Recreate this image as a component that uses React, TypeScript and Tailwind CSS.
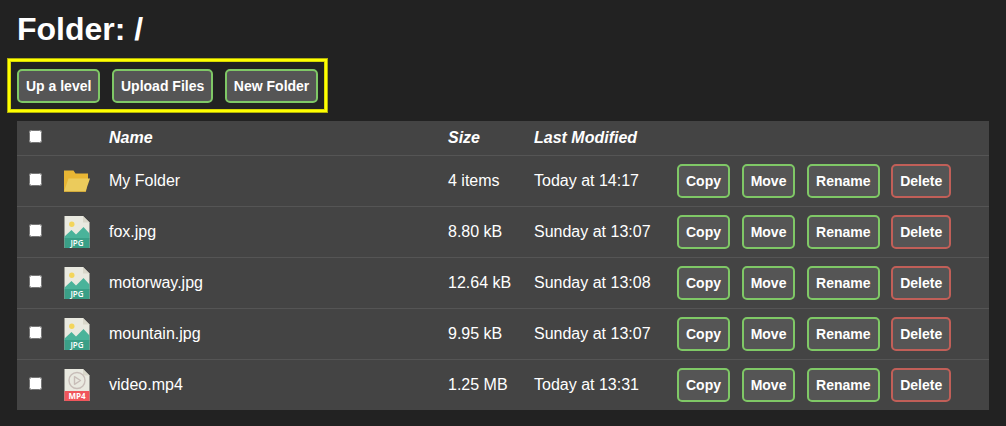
import React from "react";

type Kind = "folder" | "jpg" | "mp4";

interface Entry {
  name: string;
  kind: Kind;
  size: string;
  modified: string;
}

const entries: Entry[] = [
  { name: "My Folder", kind: "folder", size: "4 items", modified: "Today at 14:17" },
  { name: "fox.jpg", kind: "jpg", size: "8.80 kB", modified: "Sunday at 13:07" },
  { name: "motorway.jpg", kind: "jpg", size: "12.64 kB", modified: "Sunday at 13:08" },
  { name: "mountain.jpg", kind: "jpg", size: "9.95 kB", modified: "Sunday at 13:07" },
  { name: "video.mp4", kind: "mp4", size: "1.25 MB", modified: "Today at 13:31" },
];

function FolderIcon() {
  return (
    <svg viewBox="0 0 26 32" className="block h-8 w-[26px]" aria-hidden="true">
      <path d="M0 5.500h9.500l2 3H24v5l-2 13H0z" fill="#e8b634" />
      <path d="M4.500 13.500H26l-4.500 13H0z" fill="#ebcb5c" />
      <path d="M0 26.500h21.700" stroke="#d3ab3c" />
    </svg>
  );
}

function FileIcon({ kind }: { kind: "jpg" | "mp4" }) {
  return (
    <svg viewBox="0 0 26 32" className="block h-8 w-[26px]" aria-hidden="true">
      <path d="M0.500 0H19l6.500 6.500V32h-25z" fill="#e9e9e0" />
      <path d="M19 0v6.500h6.500z" fill="#d9d7ca" />
      {kind === "jpg" ? (
        <>
          <circle cx="7.800" cy="8.300" r="2.700" fill="#f3d55b" />
          <path d="M0.500 20.500L7.500 14l4.500 4.500 7.500-7.500 6 6.500V23h-25z" fill="#4ab39a" />
          <path d="M0.500 22h25v10h-25z" fill="#3a9f87" />
        </>
      ) : (
        <>
          <circle cx="13" cy="11.500" r="8" fill="none" stroke="#c8bdb8" strokeWidth="1.400" />
          <path d="M10.500 7.700v7.600l6-3.800z" fill="none" stroke="#c8bdb8" strokeWidth="1.400" strokeLinejoin="round" />
          <path d="M0.500 22h25v10h-25z" fill="#f0565c" />
        </>
      )}
      <text
        x="13"
        y="30"
        textAnchor="middle"
        fill="#fff"
        className={
          kind === "jpg"
            ? "font-['Open_Sans',sans-serif] text-[8px] font-semibold"
            : "font-['Open_Sans',sans-serif] text-[8px] font-bold"
        }
      >
        {kind === "jpg" ? "JPG" : "MP4"}
      </text>
    </svg>
  );
}

function Button({ children, danger = false }: { children: React.ReactNode; danger?: boolean }) {
  return (
    <button
      type="button"
      className={`mr-2 h-[34px] rounded-[5px] border-2 bg-[#555] px-[7px] align-top text-sm font-bold whitespace-nowrap text-white last:mr-0 ${
        danger ? "border-[#c15f58]" : "border-[#7fc866]"
      }`}
    >
      {children}
    </button>
  );
}

export default function App() {
  return (
    <main className="min-h-screen bg-[#222] px-[17px] pt-[10px] pb-4 font-['Liberation_Sans',Arial,sans-serif] text-base text-white">
      <h1 className="text-[32px] leading-[38px] font-bold">Folder: /</h1>
      <div className="mt-[11px] -ml-[9px] w-fit border-2 border-[#ff0] px-[7px] pt-2 pb-[7px] text-[13px] whitespace-nowrap shadow-[0_0_0_1px_#b0b008,inset_0_0_0_1px_#d8d804]">
        <Button>Up a level</Button> <Button>Upload Files</Button> <Button>New Folder</Button>
      </div>
      <table className="mt-[9px] w-full table-fixed border-collapse bg-[#444] text-left">
        <colgroup>
          <col className="w-[35px]" />
          <col className="w-[45px]" />
          <col />
          <col className="w-[86px]" />
          <col className="w-[143px]" />
          <col className="w-[324px]" />
        </colgroup>
        <thead>
          <tr className="h-[34px] border-b border-[#555] italic">
            <th className="pb-[3px] pl-3">
              <input type="checkbox" aria-label="Select all" className="block size-[13px]" />
            </th>
            <th aria-label="Type" />
            <th className="pl-3">Name</th>
            <th className="pl-3">Size</th>
            <th className="pl-3">Last Modified</th>
            <th aria-label="Actions" />
          </tr>
        </thead>
        <tbody>
          {entries.map((e) => (
            <tr key={e.name} className="h-[51px] border-b border-[#555] last:border-b-0">
              <td className="pb-[3px] pl-3">
                <input type="checkbox" aria-label={`Select ${e.name}`} className="block size-[13px]" />
              </td>
              <td className="pl-3">{e.kind === "folder" ? <FolderIcon /> : <FileIcon kind={e.kind} />}</td>
              <td className="pl-3">{e.name}</td>
              <td className="pl-3 whitespace-nowrap">{e.size}</td>
              <td className="pl-3 whitespace-nowrap">{e.modified}</td>
              <td className="pl-3 text-[13px] whitespace-nowrap">
                <Button>Copy</Button> <Button>Move</Button> <Button>Rename</Button> <Button danger>Delete</Button>
              </td>
            </tr>
          ))}
        </tbody>
      </table>
    </main>
  );
}
